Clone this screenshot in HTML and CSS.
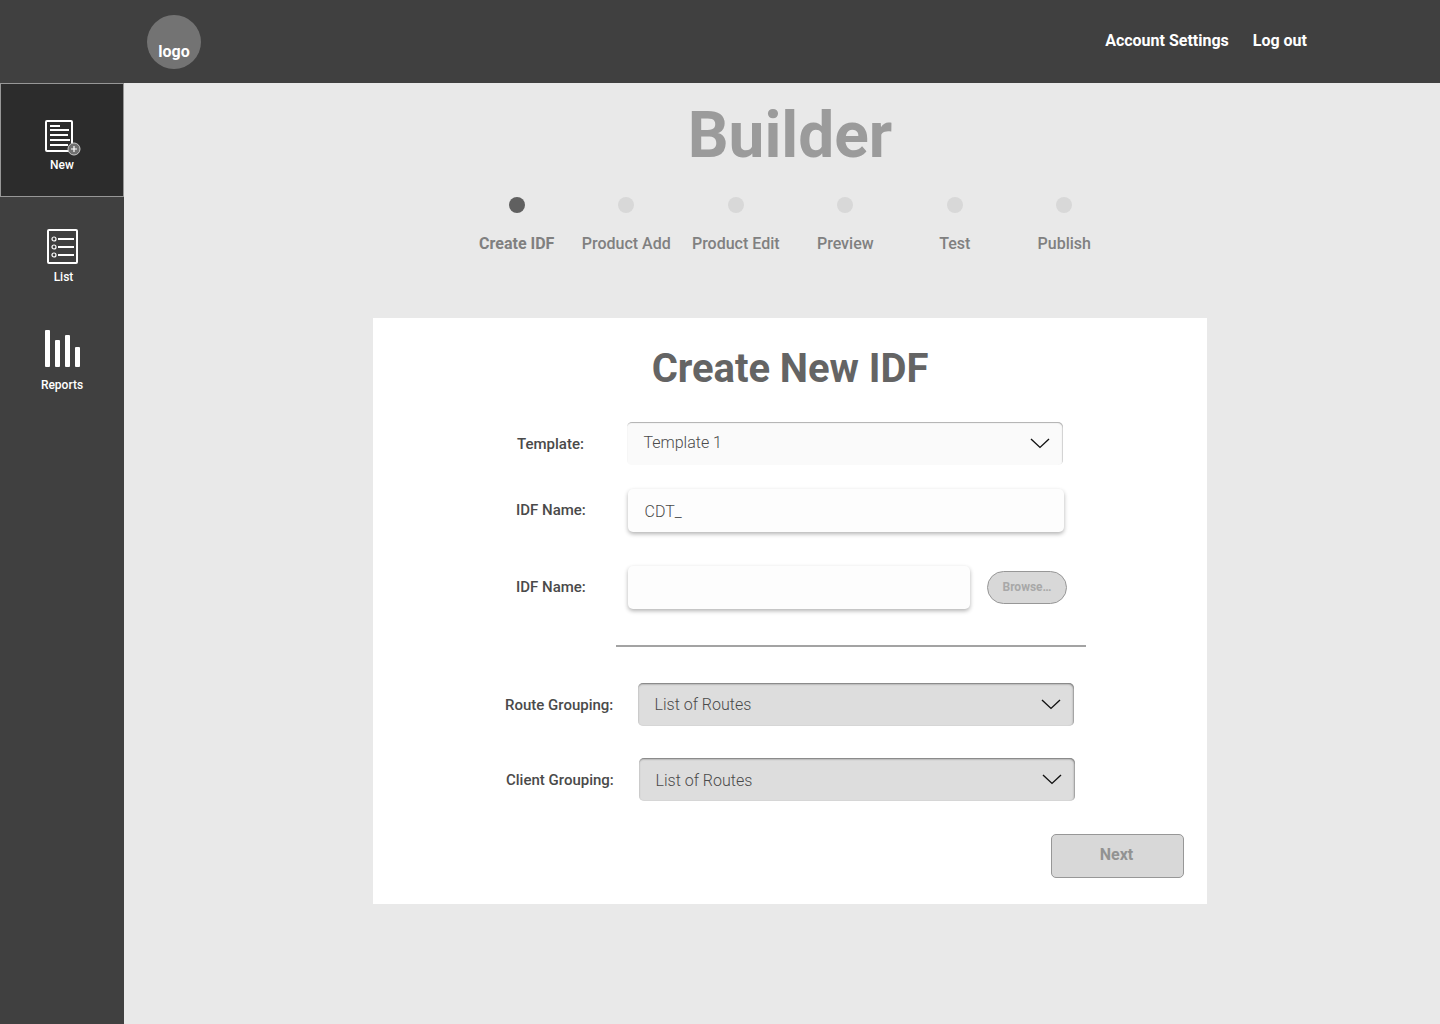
FILE: index.html
```html
<!DOCTYPE html>
<html lang="en">
<head>
<meta charset="utf-8">
<title>Builder</title>
<link rel="stylesheet" href="styles.css">
</head>
<body>
<header class="topbar">
  <div class="logo">logo</div>
  <nav class="account">
    <a class="account-link">Account Settings</a>
    <a class="account-link">Log out</a>
  </nav>
</header>
<div class="shell">
  <aside class="sidebar">
    <a class="side-item side-new">
      <svg width="38" height="37" viewBox="0 0 38 37" fill="none">
        <rect x="3" y="2" width="26" height="30" rx="1" stroke="#fff" stroke-width="2"/>
        <path d="M7 7h10M7 11h19M7 16h18M7 21h20M7 26h18" stroke="#fff" stroke-width="2"/>
        <circle cx="31" cy="30" r="6" fill="#707070" stroke="#c8c8c8" stroke-width="1"/>
        <path d="M31 27v6M28 30h6" stroke="#fff" stroke-width="1.2"/>
      </svg>
      <span>New</span>
    </a>
    <a class="side-item side-list">
      <svg width="31" height="35" viewBox="0 0 31 35" fill="none" stroke="#fff">
        <rect x="1" y="1" width="29" height="33" rx="1" stroke-width="2"/>
        <path d="M11 10h16M11 18h16M11 26h16" stroke-width="2"/>
        <circle cx="7" cy="10" r="2" stroke-width="1.2"/>
        <circle cx="7" cy="18" r="2" stroke-width="1.2"/>
        <circle cx="7" cy="26" r="2" stroke-width="1.2"/>
      </svg>
      <span>List</span>
    </a>
    <a class="side-item side-reports">
      <svg width="35" height="37" viewBox="0 0 35 37" fill="#fff">
        <rect x="0" y="0" width="5" height="37" rx="1"/>
        <rect x="10" y="10" width="5" height="27" rx="1"/>
        <rect x="20" y="5" width="5" height="32" rx="1"/>
        <rect x="30" y="17" width="5" height="20" rx="1"/>
      </svg>
      <span>Reports</span>
    </a>
  </aside>
  <main class="content">
    <h1 class="page-title">Builder</h1>
    <ol class="steps">
      <li class="step current"><i class="dot"></i>Create IDF</li>
      <li class="step"><i class="dot"></i>Product Add</li>
      <li class="step"><i class="dot"></i>Product Edit</li>
      <li class="step"><i class="dot"></i>Preview</li>
      <li class="step"><i class="dot"></i>Test</li>
      <li class="step"><i class="dot"></i>Publish</li>
    </ol>
    <section class="card">
      <h2 class="card-title">Create New IDF</h2>
      <div class="row row-template">
        <span class="label">Template:</span>
        <div class="field select light"><span>Template 1</span>
          <svg width="20" height="11" viewBox="0 0 20 11" fill="none" stroke="#111" stroke-width="1.4"><path d="M1 1l9 8.4L19 1"/></svg>
        </div>
      </div>
      <div class="row row-name">
        <span class="label">IDF Name:</span>
        <div class="field input"><span>CDT_</span></div>
      </div>
      <div class="row row-file">
        <span class="label">IDF Name:</span>
        <div class="field input short"></div>
        <button class="browse">Browse…</button>
      </div>
      <hr class="divider">
      <div class="row row-route">
        <span class="label">Route Grouping:</span>
        <div class="field select grey"><span>List of Routes</span>
          <svg width="20" height="11" viewBox="0 0 20 11" fill="none" stroke="#111" stroke-width="1.4"><path d="M1 1l9 8.4L19 1"/></svg>
        </div>
      </div>
      <div class="row row-client">
        <span class="label">Client Grouping:</span>
        <div class="field select grey"><span>List of Routes</span>
          <svg width="20" height="11" viewBox="0 0 20 11" fill="none" stroke="#111" stroke-width="1.4"><path d="M1 1l9 8.4L19 1"/></svg>
        </div>
      </div>
      <button class="next">Next</button>
    </section>
  </main>
</div>
</body>
</html>
```
FILE: styles.css
```css
* { box-sizing: border-box; }
body { margin: 0; height: 1024px; overflow: hidden; background: #e9e9e9; font-family: Roboto, sans-serif; }
h1, h2, ol { margin: 0; padding: 0; }
svg { display: block; flex: none; }
button { font-family: inherit; padding: 0; }

.topbar { height: 83px; background: #404040; display: flex; justify-content: space-between; padding: 15px 133px 0 147px; color: #fff; }
.logo { width: 54px; height: 54px; border-radius: 50%; background: #737373; font-size: 16px; font-weight: 700; line-height: 20px; padding-top: 27px; text-align: center; }
.account { display: flex; gap: 24px; padding-top: 16px; font-size: 16px; font-weight: 700; line-height: 20px; }

.shell { display: flex; height: 941px; }
.sidebar { width: 124px; background: #404040; color: #fff; font-size: 12px; font-weight: 500; line-height: 14px; }
.side-item { display: flex; flex-direction: column; align-items: center; }
.side-new { height: 114px; background: #2c2c2c; border: 1px solid #979797; padding-top: 35px; gap: 2px; }
.side-list { padding-top: 32px; gap: 6px; }
.side-list span { padding-left: 3px; }
.side-reports { padding-top: 46px; gap: 11px; }

.content { flex: 1; padding: 15px 0 0 249px; }
.page-title { width: 834px; text-align: center; font-size: 64px; line-height: 76px; font-weight: 700; color: #9b9b9b; }
.steps { list-style: none; display: grid; grid-template-columns: repeat(6, 109.5px); margin: 23px 0 0 89px; }
.step { display: flex; flex-direction: column; align-items: center; gap: 21px; font-size: 16px; line-height: 20px; font-weight: 500; color: #808080; white-space: nowrap; }
.dot { width: 16px; height: 16px; border-radius: 50%; background: #d8d8d8; }
.current { font-weight: 700; }
.current .dot { background: #606060; }

.card { width: 834px; height: 586px; margin-top: 64px; background: #fff; padding-top: 27px; }
.card-title { text-align: center; font-size: 40px; line-height: 48px; font-weight: 700; letter-spacing: -.05px; color: #646464; }
.row { display: flex; align-items: center; height: 43px; }
.row-template { margin-top: 29px; padding-left: 144px; }
.row-name { margin-top: 24px; padding-left: 143px; }
.row-file { margin-top: 34px; padding-left: 143px; }
.row-route { margin-top: 36px; padding-left: 132px; }
.row-client { margin-top: 32px; padding-left: 133px; }
.label { width: 110px; flex: none; font-size: 15px; line-height: 18px; font-weight: 500; color: #4a4a4a; white-space: nowrap; }
.row-name .label, .row-file .label { width: 112px; padding-bottom: 2px; }
.row-route .label, .row-client .label { width: 133px; }
.field { width: 436px; height: 43px; border-radius: 5px; display: flex; align-items: center; justify-content: space-between; padding: 0 13px 0 16.5px; font-size: 16px; line-height: 20px; font-weight: 300; color: #4a4a4a; }
.light { background: #fafafa; box-shadow: inset -.5px 1px 1px rgba(0,0,0,.3); }
.light span { margin-top: -2px; }
.grey { background: #ddd; box-shadow: inset -.5px 1px 2px rgba(0,0,0,.5); }
.row-client .field span { padding-top: 2px; }
.input { background: #fdfdfd; box-shadow: 0 2px 4px rgba(0,0,0,.3); }
.input span { padding-top: 2px; }
.short { width: 342px; }
.browse { width: 80px; height: 33px; margin-left: 17px; padding-bottom: 1px; border: 1px solid #979797; border-radius: 17px; background: #d8d8d8; color: #a8a8a8; font-size: 12px; font-weight: 700; }
.divider { width: 470px; height: 2px; border: 0; margin: 36px 0 0 243px; background: #a3a3a3; }
.next { display: block; width: 133px; height: 44px; margin: 33px 0 0 678px; padding: 0 2px 3px 0; border: 1px solid #979797; border-radius: 5px; background: #d8d8d8; color: #929292; font-size: 16px; font-weight: 700; }
```
